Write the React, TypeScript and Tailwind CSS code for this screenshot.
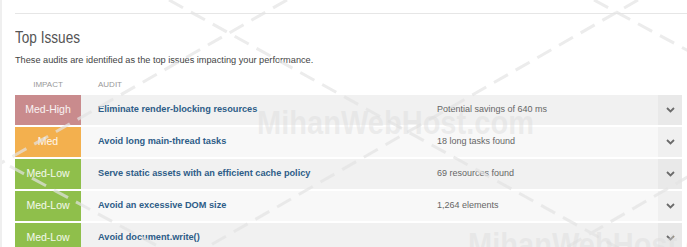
import React from 'react';

type Issue = {
  impact: string;
  color: string;
  audit: string;
  detail: string;
};

const ISSUES: Issue[] = [
  { impact: 'Med-High', color: 'bg-[#c98b8d]', audit: 'Eliminate render-blocking resources', detail: 'Potential savings of 640 ms' },
  { impact: 'Med', color: 'bg-[#f3b04e]', audit: 'Avoid long main-thread tasks', detail: '18 long tasks found' },
  { impact: 'Med-Low', color: 'bg-[#8fbf4b]', audit: 'Serve static assets with an efficient cache policy', detail: '69 resources found' },
  { impact: 'Med-Low', color: 'bg-[#8fbf4b]', audit: 'Avoid an excessive DOM size', detail: '1,264 elements' },
  { impact: 'Med-Low', color: 'bg-[#8fbf4b]', audit: 'Avoid document.write()', detail: '' },
];

const Chevron = () => (
  <svg width="9" height="6" viewBox="0 0 9 6" fill="none">
    <polyline points="1,1 4.5,4.5 8,1" stroke="#6b6b6b" strokeWidth="1.8" />
  </svg>
);

// faint watermark lines laid over the page
const Watermark = () => (
  <div className="pointer-events-none absolute inset-0">
    <svg width="687" height="247" className="absolute inset-0">
      <g stroke="#e4e4e4" strokeWidth="3" strokeDasharray="16 9" opacity="0.7">
        <line x1="-300" y1="0" x2="200" y2="270" />
        <line x1="167" y1="0" x2="620" y2="250" />
        <line x1="592" y1="0" x2="1000" y2="220" />
        <line x1="285" y1="0" x2="-150" y2="248" />
        <line x1="636" y1="0" x2="200" y2="250" />
        <line x1="990" y1="0" x2="560" y2="250" />
      </g>
    </svg>
    <div className="absolute left-[255px] top-[104px] origin-left scale-x-[0.88] text-[33px] leading-[38px] font-bold text-[#dcdcdc]/45">
      MihanWebHost.com
    </div>
    <div className="absolute left-[466px] top-[226px] origin-left scale-x-[0.88] text-[33px] leading-[38px] font-bold text-[#dcdcdc]/45">
      MihanWebHost.com
    </div>
  </div>
);

const App: React.FC = () => {
  return (
    <div className="relative w-[687px] h-[247px] overflow-hidden bg-white border-l-2 border-[#efefef] [font-family:'Liberation_Sans',Arial,sans-serif]">
      <div className="pl-[13px]">
        <div className="h-[14px] border-b border-[#e6e6e6]" />
        <h2 className="mt-[14px] origin-left scale-x-[0.8] text-[17px] leading-[20px] font-light text-[#555]">Top Issues</h2>
        <p className="mt-[5px] text-[9.2px] leading-[14px] text-[#444]">
          These audits are identified as the top issues impacting your performance.
        </p>
        <div className="mt-[12px] flex text-[8px] leading-[12px] uppercase text-[#999]">
          <div className="w-[66px] text-center">Impact</div>
          <div className="pl-[17px]">Audit</div>
        </div>

        <div className="mt-[4px] w-[667px] flex flex-col gap-[2px]">
          {ISSUES.map((it, i) => {
            const odd = i % 2 === 0;
            return (
              <div key={i} className={`flex h-[30px] ${odd ? 'bg-[#f1f1f1]' : 'bg-[#f8f8f8]'}`}>
                <div className={`w-[66px] flex items-center justify-center text-[10.5px] text-white/90 ${it.color}`}>
                  {it.impact}
                </div>
                <div className="w-[356px] pl-[17px] flex items-center text-[9.2px] font-bold text-[#2e5d88]">
                  {it.audit}
                </div>
                <div className="flex-1 flex items-center text-[9px] text-[#666]">{it.detail}</div>
                <div className={`w-[24px] flex items-center justify-center ${odd ? 'bg-[#e9e9e9]' : 'bg-[#f0f0f0]'}`}>
                  <Chevron />
                </div>
              </div>
            );
          })}
        </div>
      </div>
      <Watermark />
    </div>
  );
};

export default App;
